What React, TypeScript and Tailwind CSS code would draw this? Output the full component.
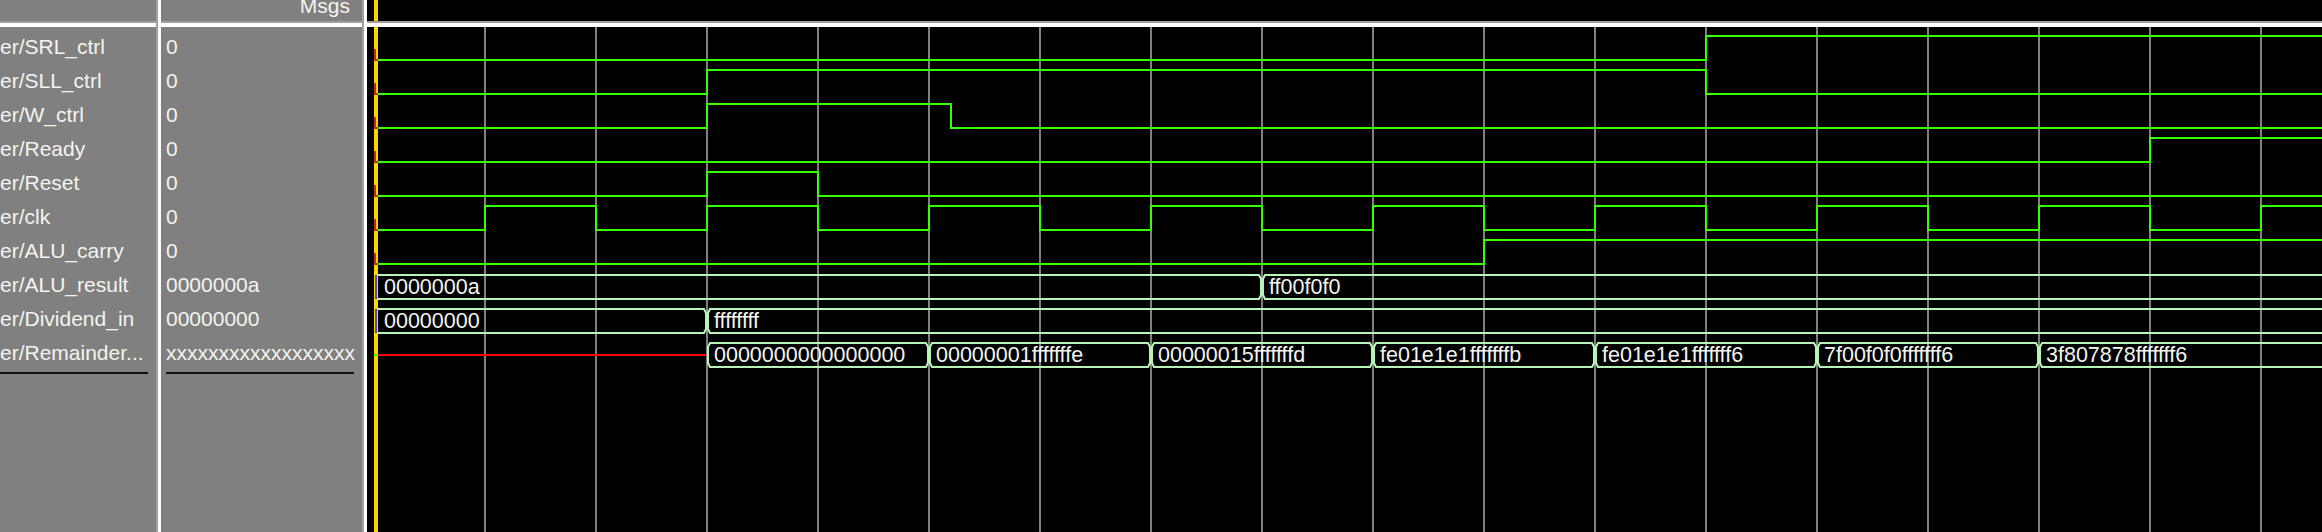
import React from 'react';

const FONT = "font-['Liberation_Sans',Arial,sans-serif]";
const GREEN = '#33ff00';
const BUS = '#b8f4b8';
const TXT = '#f4f4ee';

// grid / clock edges
const g = (k: number) => 485 + 111 * k;
const grid = Array.from({ length: 17 }, (_, k) => g(k));

const rowHigh = (i: number) => 36 + 34 * i;
const rowLow = (i: number) => 60 + 34 * i;

type BitSig = { name: string; value: string; toggles: number[] };
type BusSeg = { x0: number; x1: number; label: string };

const bits: BitSig[] = [
  { name: 'er/SRL_ctrl', value: '0', toggles: [g(11)] },
  { name: 'er/SLL_ctrl', value: '0', toggles: [g(2), g(11)] },
  { name: 'er/W_ctrl', value: '0', toggles: [g(2), 951] },
  { name: 'er/Ready', value: '0', toggles: [g(15)] },
  { name: 'er/Reset', value: '0', toggles: [g(2), g(3)] },
  { name: 'er/clk', value: '0', toggles: grid },
  { name: 'er/ALU_carry', value: '0', toggles: [g(9)] },
];

const END = 2340;

const buses: { name: string; value: string; segs: BusSeg[]; xUntil?: number }[] = [
  {
    name: 'er/ALU_result',
    value: '0000000a',
    segs: [
      { x0: 370, x1: g(7), label: '0000000a' },
      { x0: g(7), x1: END, label: 'ff00f0f0' },
    ],
  },
  {
    name: 'er/Dividend_in',
    value: '00000000',
    segs: [
      { x0: 370, x1: g(2), label: '00000000' },
      { x0: g(2), x1: END, label: 'ffffffff' },
    ],
  },
  {
    name: 'er/Remainder...',
    value: 'xxxxxxxxxxxxxxxxxx',
    xUntil: g(2),
    segs: [
      { x0: g(2), x1: g(4), label: '0000000000000000' },
      { x0: g(4), x1: g(6), label: '00000001fffffffe' },
      { x0: g(6), x1: g(8), label: '00000015fffffffd' },
      { x0: g(8), x1: g(10), label: 'fe01e1e1fffffffb' },
      { x0: g(10), x1: g(12), label: 'fe01e1e1fffffff6' },
      { x0: g(12), x1: g(14), label: '7f00f0f0fffffff6' },
      { x0: g(14), x1: END, label: '3f807878fffffff6' },
    ],
  },
];

const bitPath = (i: number, toggles: number[]) => {
  let level = 0;
  let d = `M378 ${rowLow(i)}`;
  toggles.forEach((x) => {
    level = 1 - level;
    d += ` H${x} V${level ? rowHigh(i) : rowLow(i)}`;
  });
  return d + ` H${END}`;
};

const segPath = (x0: number, x1: number, top: number, bot: number) =>
  `M${x0 + 1} ${top + 4} L${x0 + 3} ${top} H${x1 - 3} L${x1 - 1} ${top + 4} V${bot - 4} L${x1 - 3} ${bot} H${x0 + 3} L${x0 + 1} ${bot - 4} Z`;

const allRows = [...bits.map((b) => ({ name: b.name, value: b.value })), ...buses.map((b) => ({ name: b.name, value: b.value }))];

const HeaderBand = () => (
  <>
    <div className="h-[2px] bg-[#a0a0a0]" />
    <div className="h-[4px] bg-white" />
  </>
);

const ColSep = () => (
  <>
    <div className="w-[2px] bg-[#a0a0a0]" />
    <div className="w-[3px] bg-white" />
  </>
);

export default function App() {
  return (
    <div className={`flex w-[2322px] h-[532px] overflow-hidden bg-black ${FONT} text-[21px] text-[#f4f4ee]`}>
      {/* noms */}
      <div className="w-[156px] shrink-0 bg-[#808080] flex flex-col">
        <div className="h-[21px]" />
        <HeaderBand />
        {allRows.map((r) => (
          <div key={r.name} className="h-[34px] pt-[6px] leading-[28px] whitespace-nowrap overflow-hidden">
            {r.name}
          </div>
        ))}
        <div className="mt-[5px] h-[2px] w-[148px] bg-[#111]" />
      </div>
      <ColSep />

      {/* valeurs */}
      <div className="w-[201px] shrink-0 bg-[#808080] flex flex-col">
        <div className="h-[21px] overflow-hidden flex justify-end pr-[12px]">
          <span className="leading-[21px] -translate-y-[5px]">Msgs</span>
        </div>
        <HeaderBand />
        {allRows.map((r) => (
          <div key={r.name} className="h-[34px] pt-[6px] pl-[5px] leading-[28px] whitespace-nowrap overflow-hidden">
            {r.value}
          </div>
        ))}
        <div className="mt-[5px] ml-[5px] h-[2px] w-[188px] bg-[#111]" />
      </div>
      <ColSep />

      {/* waveforms */}
      <div className="flex-1 flex flex-col bg-black">
        <div className="h-[21px] relative">
          <div className="absolute left-[7px] top-0 h-full w-[4px] bg-[#ffd700]" />
        </div>
        <HeaderBand />
        <svg width={1955} height={505} viewBox="367 27 1955 505" className="block" fontFamily="'Liberation Sans', Arial, sans-serif">
          <rect x={367} y={27} width={1955} height={505} fill="#000" />
          {grid.map((x) => (
            <line key={x} x1={x} y1={27} x2={x} y2={532} stroke="#808080" strokeWidth={2} />
          ))}

          {bits.map((b, i) => (
            <path key={b.name} d={bitPath(i, b.toggles)} fill="none" stroke={GREEN} strokeWidth={2} />
          ))}

          {buses.map((b, j) => {
            const top = 275 + 34 * j;
            const bot = 299 + 34 * j;
            const mid = (top + bot) / 2;
            return (
              <g key={b.name}>
                {b.xUntil && <line x1={378} y1={mid} x2={b.xUntil - 1} y2={mid} stroke="#ff0000" strokeWidth={2} />}
                {b.segs.map((s) => (
                  <g key={s.x0}>
                    <path d={segPath(s.x0, s.x1, top, bot)} fill="none" stroke={BUS} strokeWidth={2} />
                    <text x={Math.max(s.x0, 377) + 7} y={top + 18.5} fontSize={21.5} fill={TXT}>
                      {s.label}
                    </text>
                  </g>
                ))}
              </g>
            );
          })}

          {/* curseur */}
          <rect x={367} y={27} width={7} height={505} fill="#000" />
          <rect x={374} y={27} width={4} height={505} fill="#ffd700" />
          {bits.map((b, i) => (
            <path key={b.name} d={`M375 ${rowLow(i) - 11} V${rowLow(i)} H378`} fill="none" stroke="#c82818" strokeWidth={2} />
          ))}
          <line x1={376} y1={275} x2={376} y2={299} stroke="#5048c8" strokeWidth={2} />
          <line x1={376} y1={309} x2={376} y2={333} stroke="#5048c8" strokeWidth={2} />
          <line x1={374} y1={355} x2={378} y2={355} stroke={GREEN} strokeWidth={2} />
        </svg>
      </div>
    </div>
  );
}
